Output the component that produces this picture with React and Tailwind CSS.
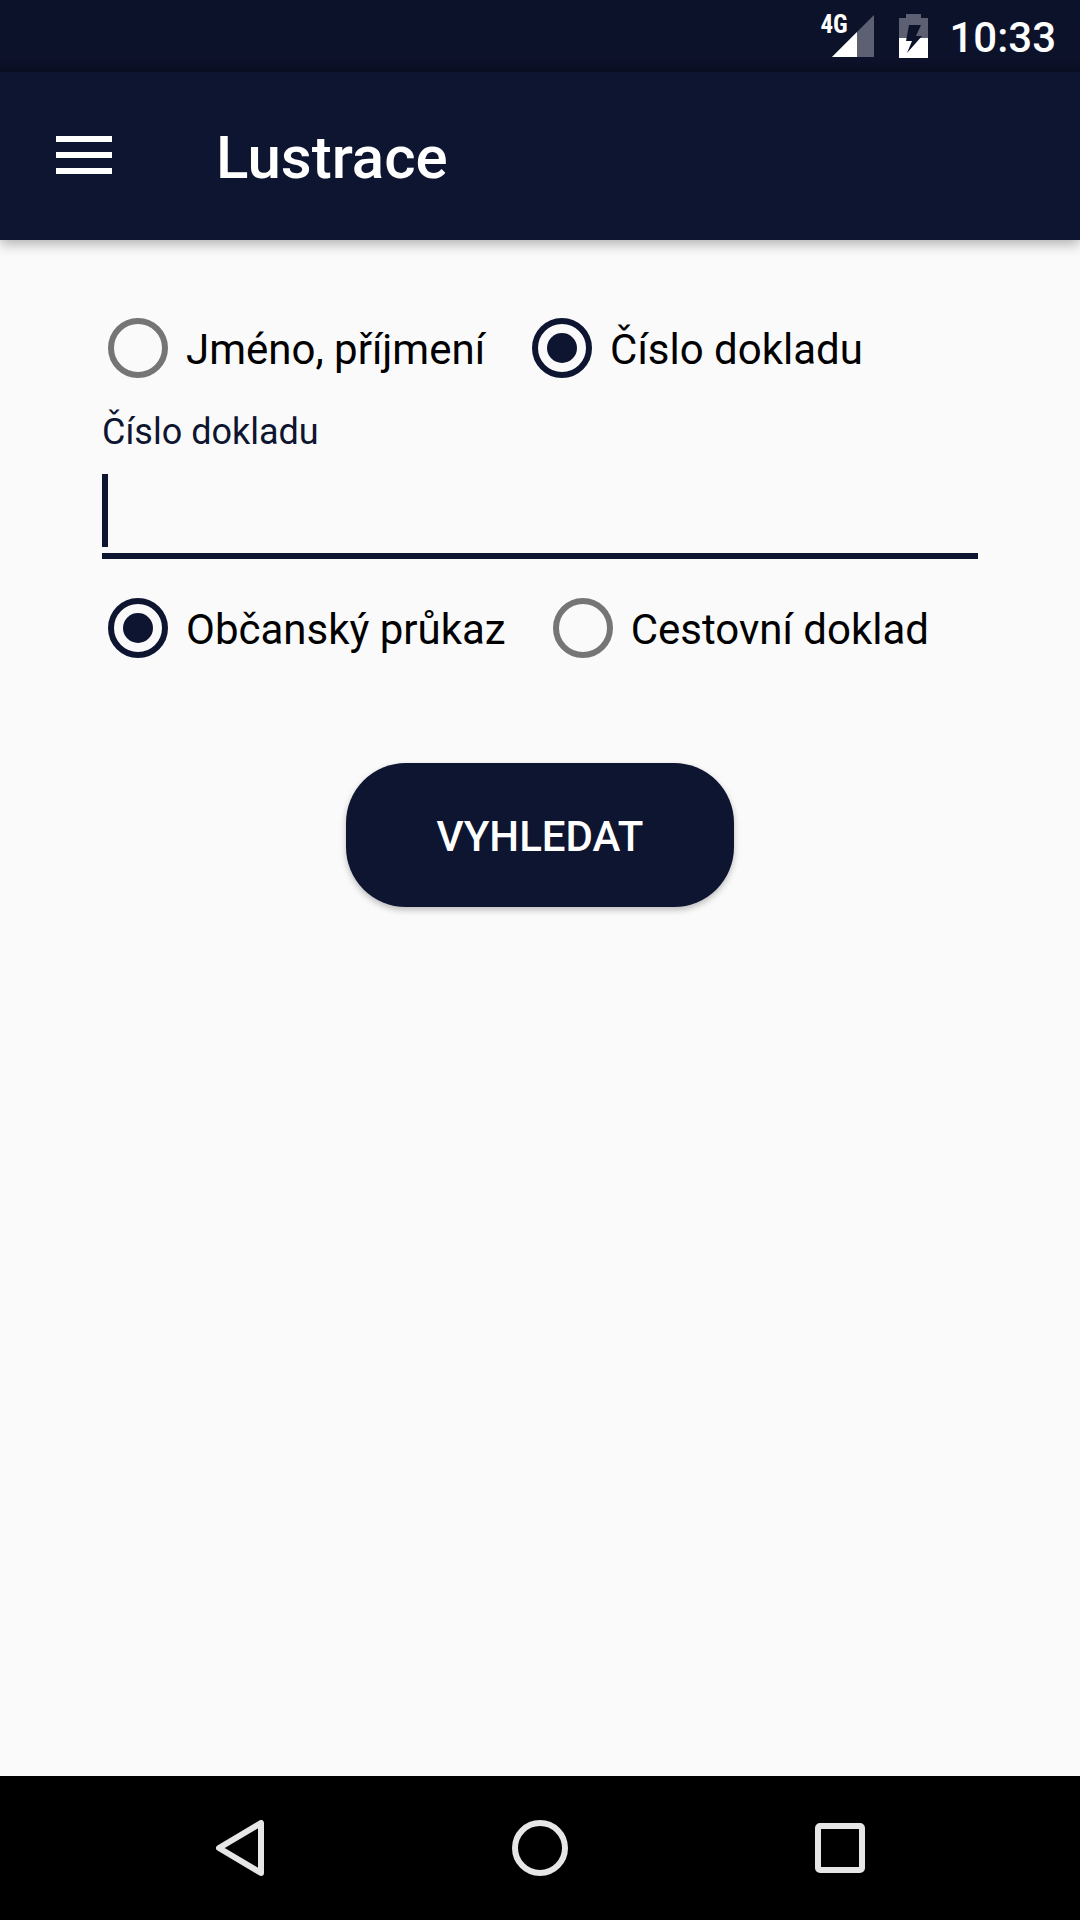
import React, { useState } from 'react';

function RadioOption({ name, value, label, selected, onChange }) {
  return (
    <label className="flex items-center gap-[18px] cursor-pointer">
      <input
        type="radio"
        name={name}
        value={value}
        checked={selected === value}
        onChange={() => onChange(value)}
        className="appearance-none shrink-0 grid place-content-center size-[60px] rounded-full border-6 border-[#757575] checked:border-[#0e1530] checked:before:block checked:before:size-[30px] checked:before:rounded-full checked:before:bg-[#0e1530]"
      />
      <span className="pt-1 text-[42px] leading-[56px] text-black">{label}</span>
    </label>
  );
}

function StatusBar() {
  return (
    <div className="h-[72px] flex items-center justify-end pr-6 bg-linear-to-b from-[#0d122b] from-80% to-[#0b0f24] text-white">
      <div className="relative pl-3">
        <svg width="42" height="42" viewBox="0 0 42 42" aria-hidden="true">
          <path d="M0 42 42 0v42z" fill="#5d6072" />
          <path d="M0 42 25 17v25z" fill="#fff" />
        </svg>
        <span className="absolute left-0 -top-1 font-['Roboto_Condensed','Liberation_Sans_Narrow',Roboto,sans-serif] font-bold text-[25px] leading-[28px]">
          4G
        </span>
      </div>
      <svg width="29" height="44" viewBox="0 0 29 44" className="ml-[25px]" aria-hidden="true">
        <path d="M7 0h15v4h7v20H0V4h7z" fill="#5d6072" />
        <path d="M0 24h29v20H0z" fill="#fff" />
        <path d="M10 11h12l-5 11h6L8 39l5-12H7z" fill="#0d122b" />
      </svg>
      <span className="ml-[21px] pt-1 text-[42px] leading-[56px] font-medium">10:33</span>
    </div>
  );
}

function AppBar() {
  return (
    <header className="relative h-[168px] flex items-center gap-[104px] px-14 bg-[#0e1530] text-white shadow-[0_4px_12px_rgba(0,0,0,0.3)]">
      <button type="button" aria-label="Menu">
        <svg width="56" height="40" viewBox="0 0 56 40" fill="#fff">
          <path d="M0 0h56v6H0zM0 16h56v6H0zM0 32h56v6H0z" />
        </svg>
      </button>
      <h1 className="pt-1 text-[60px] leading-[72px] font-medium">Lustrace</h1>
    </header>
  );
}

function NavBar() {
  return (
    <nav className="h-36 grid grid-cols-3 px-[90px] bg-black">
      <button type="button" aria-label="Back" className="flex items-center justify-center">
        <svg width="48" height="56" viewBox="0 0 48 56" fill="none">
          <path d="M45 3v50L3 28z" stroke="#e6e6e6" strokeWidth="6" strokeLinejoin="round" />
        </svg>
      </button>
      <button type="button" aria-label="Home" className="flex items-center justify-center">
        <svg width="56" height="56" viewBox="0 0 56 56" fill="none">
          <circle cx="28" cy="28" r="25" stroke="#e6e6e6" strokeWidth="6" />
        </svg>
      </button>
      <button type="button" aria-label="Recent" className="flex items-center justify-center">
        <svg width="50" height="50" viewBox="0 0 50 50" fill="none">
          <rect x="3" y="3" width="44" height="44" rx="2" stroke="#e6e6e6" strokeWidth="6" />
        </svg>
      </button>
    </nav>
  );
}

function App() {
  const [searchBy, setSearchBy] = useState('document');
  const [docType, setDocType] = useState('id');
  const [number, setNumber] = useState('');

  return (
    <div className="min-h-screen flex flex-col bg-[#fafafa] font-[Roboto,sans-serif]">
      <StatusBar />
      <AppBar />

      <main className="flex-1 px-[102px] pt-[78px]">
        <form onSubmit={(e) => e.preventDefault()} className="flex flex-col">
          <div className="flex gap-[47px] pl-1.5">
            <RadioOption name="searchBy" value="name" label="Jméno, příjmení" selected={searchBy} onChange={setSearchBy} />
            <RadioOption name="searchBy" value="document" label="Číslo dokladu" selected={searchBy} onChange={setSearchBy} />
          </div>

          <label htmlFor="number" className="mt-[30px] text-[36px] leading-[48px] text-[#0e1530]">
            Číslo dokladu
          </label>
          <div className="relative mt-[18px]">
            <input
              id="number"
              type="text"
              value={number}
              onChange={(e) => setNumber(e.target.value)}
              className="block w-full h-[85px] border-b-6 border-[#0e1530] text-[54px] text-black outline-none caret-transparent"
            />
            {!number && <span className="absolute left-0 top-0 w-1.5 h-[73px] bg-[#0e1530]" />}
          </div>

          <div className="mt-[39px] flex gap-[47px] pl-1.5">
            <RadioOption name="docType" value="id" label="Občanský průkaz" selected={docType} onChange={setDocType} />
            <RadioOption name="docType" value="passport" label="Cestovní doklad" selected={docType} onChange={setDocType} />
          </div>

          <button
            type="submit"
            className="mt-[105px] self-center h-36 px-[91px] pt-1 rounded-[60px] bg-[#0e1530] text-white text-[42px] leading-[56px] font-medium shadow-[0_3px_6px_rgba(0,0,0,0.25)]"
          >
            VYHLEDAT
          </button>
        </form>
      </main>

      <NavBar />
    </div>
  );
}

export default App;
